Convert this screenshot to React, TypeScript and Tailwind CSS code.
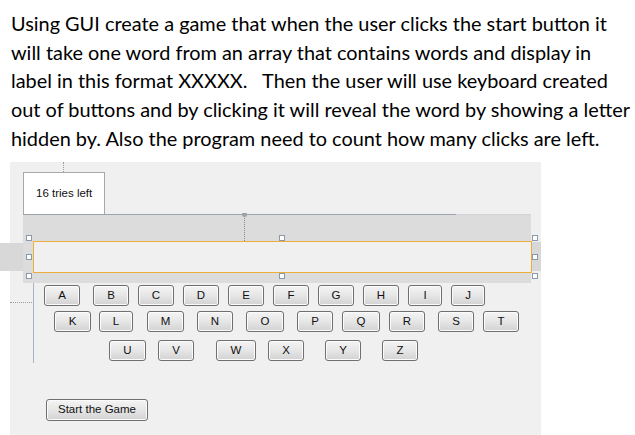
import React from "react";

type Key = { l: string; cls: string };

// letter keys, margins copied from the form designer layout
const ROW1: Key[] = [
  { l: "A", cls: "ml-[34px] w-[36px]" },
  { l: "B", cls: "ml-[13px] w-[36px]" },
  { l: "C", cls: "ml-[9px] w-[36px]" },
  { l: "D", cls: "ml-[9px] w-[36px]" },
  { l: "E", cls: "ml-[9px] w-[36px]" },
  { l: "F", cls: "ml-[9px] w-[36px]" },
  { l: "G", cls: "ml-[9px] w-[36px]" },
  { l: "H", cls: "ml-[9px] w-[36px]" },
  { l: "I", cls: "ml-[9px] w-[34px]" },
  { l: "J", cls: "ml-[9px] w-[34px]" },
];

const ROW2: Key[] = [
  { l: "K", cls: "ml-[44px] w-[37px]" },
  { l: "L", cls: "ml-[8px] w-[34px]" },
  { l: "M", cls: "ml-[14px] w-[37px]" },
  { l: "N", cls: "ml-[13px] w-[36px]" },
  { l: "O", cls: "ml-[13px] w-[38px]" },
  { l: "P", cls: "ml-[13px] w-[36px]" },
  { l: "Q", cls: "ml-[9px] w-[38px]" },
  { l: "R", cls: "ml-[9px] w-[36px]" },
  { l: "S", cls: "ml-[13px] w-[36px]" },
  { l: "T", cls: "ml-[9px] w-[36px]" },
];

const ROW3: Key[] = [
  { l: "U", cls: "ml-[99px] w-[37px]" },
  { l: "V", cls: "ml-[12px] w-[36px]" },
  { l: "W", cls: "ml-[22px] w-[40px]" },
  { l: "X", cls: "ml-[12px] w-[36px]" },
  { l: "Y", cls: "ml-[21px] w-[36px]" },
  { l: "Z", cls: "ml-[21px] w-[36px]" },
];

const BTN =
  "h-[21px] shrink-0 rounded-[3px] border border-[#707070] bg-gradient-to-b from-[#f4f4f4] via-[#e6e6e6] to-[#d2d2d2] text-[11.5px] text-[#111] flex items-center justify-center shadow-[inset_0_0_0_1px_#fbfbfb]";

function KeyRow({ keys, cls }: { keys: Key[]; cls: string }) {
  return (
    <div className={`flex ${cls}`}>
      {keys.map((k) => (
        <button key={k.l} className={`${BTN} ${k.cls}`}>
          {k.l}
        </button>
      ))}
    </div>
  );
}

function Handle({ cls }: { cls: string }) {
  return <span className={`absolute w-[6px] h-[6px] border border-[#8a98a8] bg-white ${cls}`} />;
}

export default function App() {
  return (
    <div className="w-[635px] h-[435px] bg-white overflow-hidden relative">
      {/* question text */}
      <div
        className="h-[162px] pl-[11px] pt-[9px] text-[19.9px] leading-[28.7px] text-black whitespace-pre"
        style={{ fontFamily: "Lato, 'Open Sans', sans-serif" }}
      >
        Using GUI create a game that when the user clicks the start button it
        <br />
        will take one word from an array that contains words and display in
        <br />
        label in this format XXXXX.   Then the user will use keyboard created
        <br />
        out of buttons and by clicking it will reveal the word by showing a letter
        <br />
        hidden by. Also the program need to count how many clicks are left.
      </div>

      {/* designer form */}
      <div
        className="relative ml-[10px] w-[531px] h-[273px] bg-[#f0f0f0] pt-[10px]"
        style={{ fontFamily: "'Liberation Sans', Arial, sans-serif" }}
      >
        <div className="ml-[13px] w-[82px] h-[42px] bg-white border border-[#a8a8a8] border-b-0 flex items-center pl-[12px] text-[11.5px] text-[#111]">
          16 tries left
        </div>

        <div className="relative ml-[13px] w-[508px] h-[69px] bg-[#dcdcdc] border-t border-[#9ca3ab]">
          <div className="absolute -top-px left-[433px] right-0 h-px bg-[#cfd2d6]" />
          <div className="ml-[10px] mt-[26px] w-[499px] h-[32px] bg-[#f0f0f0] border border-[#eeae3e]" />
        </div>

        <KeyRow keys={ROW1} cls="mt-[2px]" />
        <KeyRow keys={ROW2} cls="mt-[5px]" />
        <KeyRow keys={ROW3} cls="mt-[8px]" />

        <button className={`${BTN} h-[22px] w-[102px] ml-[36px] mt-[38px]`}>Start the Game</button>

        {/* designer guides and handles */}
        <span className="absolute left-[53px] top-0 h-[10px] border-l border-dotted border-[#9a9a9a]" />
        <span className="absolute left-[234px] top-[53px] h-[26px] border-l border-dotted border-[#8a8a8a]" />
        <span className="absolute left-[232px] top-[51px] w-[5px] h-[4px] rounded-b-full bg-[#9aa2aa]" />
        <span className="absolute -left-[10px] top-[81px] w-[23px] h-[28px] bg-[#d8d8d8]" />
        <span className="absolute left-[522px] top-[80px] w-[9px] h-[29px] bg-[#d8d8d8]" />
        <span className="absolute left-[23px] top-[121px] h-[80px] w-px bg-[#a7b4c4]" />
        <span className="absolute left-0 top-[140px] w-[22px] border-t border-dotted border-[#9a9a9a]" />
        <Handle cls="left-[16px] top-[73px]" />
        <Handle cls="left-[16px] top-[92px]" />
        <Handle cls="left-[16px] top-[111px]" />
        <Handle cls="left-[269px] top-[73px]" />
        <Handle cls="left-[269px] top-[111px]" />
        <Handle cls="left-[522px] top-[73px]" />
        <Handle cls="left-[522px] top-[92px] border-[#6f9bd1] bg-[#dbe8f7]" />
        <Handle cls="left-[522px] top-[111px]" />
      </div>
    </div>
  );
}
